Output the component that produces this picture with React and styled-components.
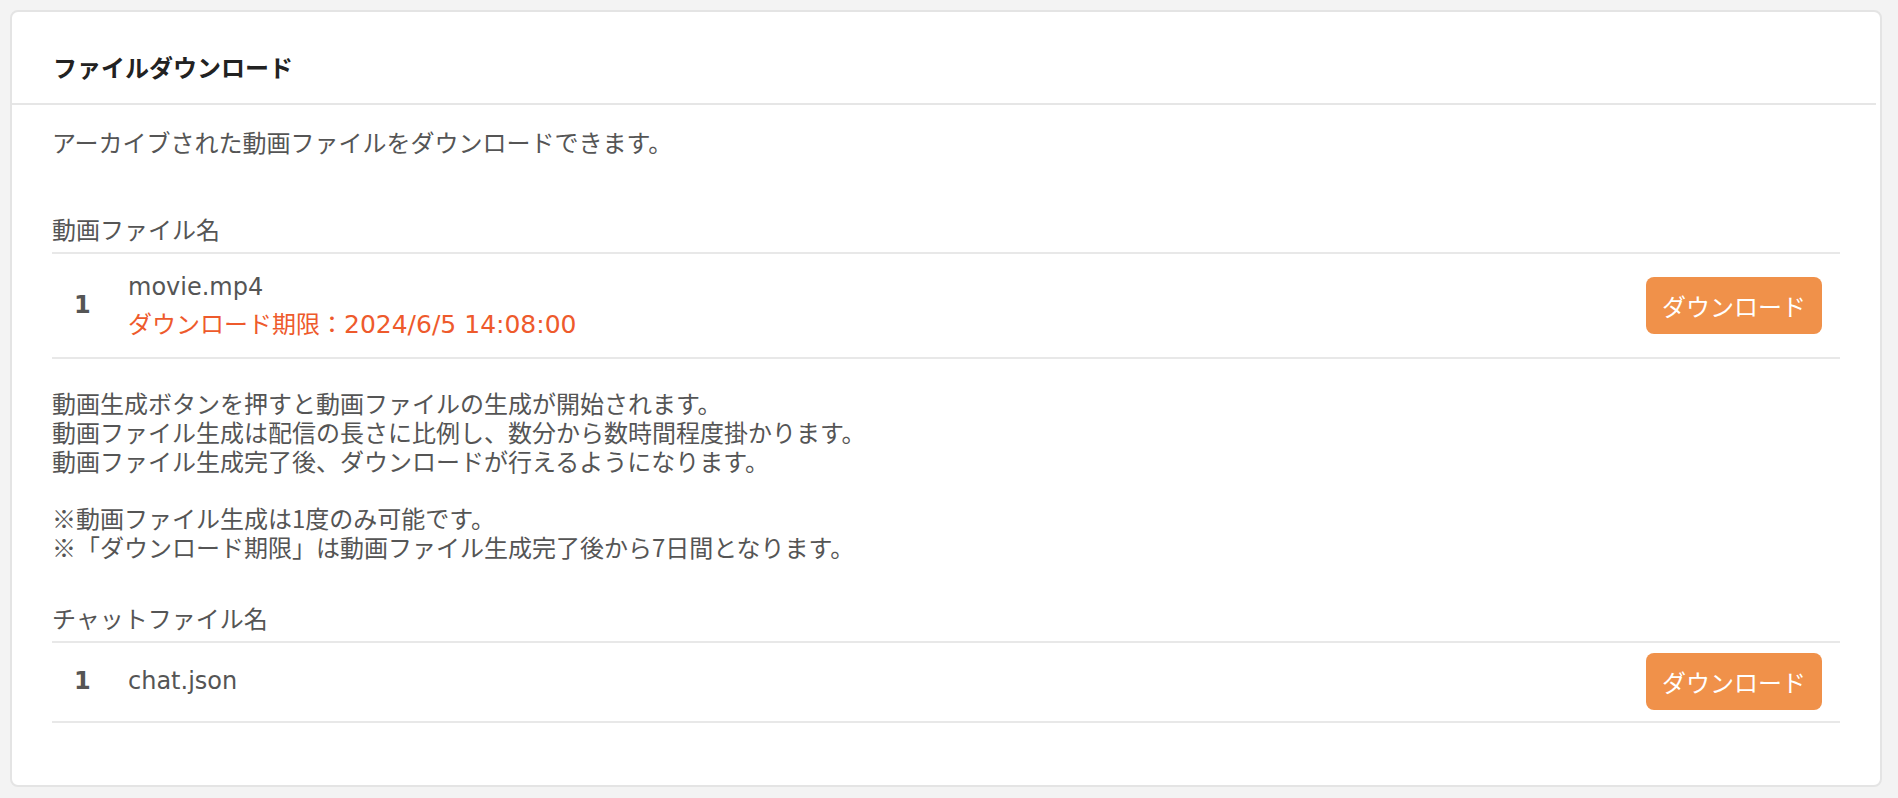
import React from "react";
import styled, { createGlobalStyle } from "styled-components";

const GlobalStyle = createGlobalStyle`
  html, body {
    margin: 0;
    padding: 0;
    background: #f3f3f3;
  }
  body {
    font-family: "Noto Sans CJK JP", "Noto Sans", sans-serif;
    color: #555555;
  }
  * { box-sizing: border-box; }
`;

const Page = styled.div`
  padding: 10px 16px 10px 10px;
`;

const Card = styled.section`
  background: #ffffff;
  border: 2px solid #e4e4e4;
  border-radius: 8px;
`;

const Header = styled.header`
  padding: 35px 41px 16px;
  margin-right: 4px;
  border-bottom: 2px solid #e6e6e6;
`;

const Title = styled.h2`
  margin: 0;
  font-size: 24px;
  line-height: 40px;
  font-weight: 700;
  color: #222222;
`;

const Body = styled.div`
  padding: 17px 40px 62px;
`;

const Text = styled.p`
  margin: 0;
  font-size: 24px;
  line-height: 40px;
`;

const Notes = styled.p`
  margin: 30px 0 0;
  font-size: 24px;
  line-height: 28.8px;
`;

const SectionLabel = styled.div`
  margin: ${(p) => p.$top}px 0 3px;
  font-size: 24px;
  line-height: 40px;
`;

const List = styled.div`
  border-top: 2px solid #e8e8e8;
`;

const Row = styled.div`
  display: flex;
  align-items: center;
  padding: 10px 18px 11px 0;
  border-bottom: 2px solid #e8e8e8;
`;

const Num = styled.div`
  width: 76px;
  padding-left: 22px;
  font-family: "DejaVu Sans", sans-serif;
  font-size: 24px;
  font-weight: 700;
  color: #555555;
`;

const Info = styled.div`
  flex: 1;
  min-width: 0;
`;

const FileName = styled.div`
  font-family: "DejaVu Sans", sans-serif;
  font-size: 24px;
  line-height: 41px;
  color: #555555;
`;

const Expiry = styled.div`
  margin-bottom: 8px;
  font-size: 24px;
  line-height: 30px;
  color: #ee5a2c;
`;

const Latin = styled.span`
  font-family: "DejaVu Sans", sans-serif;
  font-size: 25px;
  line-height: 1;
`;

const DownloadButton = styled.button`
  appearance: none;
  border: none;
  border-radius: 8px;
  background: #f0914a;
  color: #ffffff;
  font-family: "Noto Sans CJK JP", sans-serif;
  font-size: 24px;
  line-height: 41px;
  padding: 8px 16px;
  cursor: pointer;
`;

const MovieInfo = styled(Info)`
  padding-top: 3px;
`;

export default function App() {
  return (
    <>
      <GlobalStyle />
      <Page>
        <Card>
          <Header>
            <Title>ファイルダウンロード</Title>
          </Header>
          <Body>
            <Text>アーカイブされた動画ファイルをダウンロードできます。</Text>

            <SectionLabel $top={47}>動画ファイル名</SectionLabel>
            <List>
              <Row>
                <Num>1</Num>
                <MovieInfo>
                  <FileName>movie.mp4</FileName>
                  <Expiry>
                    ダウンロード期限：<Latin>2024/6/5 14:08:00</Latin>
                  </Expiry>
                </MovieInfo>
                <DownloadButton>ダウンロード</DownloadButton>
              </Row>
            </List>

            <Notes>
              動画生成ボタンを押すと動画ファイルの生成が開始されます。
              <br />
              動画ファイル生成は配信の長さに比例し、数分から数時間程度掛かります。
              <br />
              動画ファイル生成完了後、ダウンロードが行えるようになります。
              <br />
              <br />
              ※動画ファイル生成は1度のみ可能です。
              <br />
              ※「ダウンロード期限」は動画ファイル生成完了後から7日間となります。
            </Notes>

            <SectionLabel $top={36}>チャットファイル名</SectionLabel>
            <List>
              <Row>
                <Num>1</Num>
                <Info>
                  <FileName>chat.json</FileName>
                </Info>
                <DownloadButton>ダウンロード</DownloadButton>
              </Row>
            </List>
          </Body>
        </Card>
      </Page>
    </>
  );
}
